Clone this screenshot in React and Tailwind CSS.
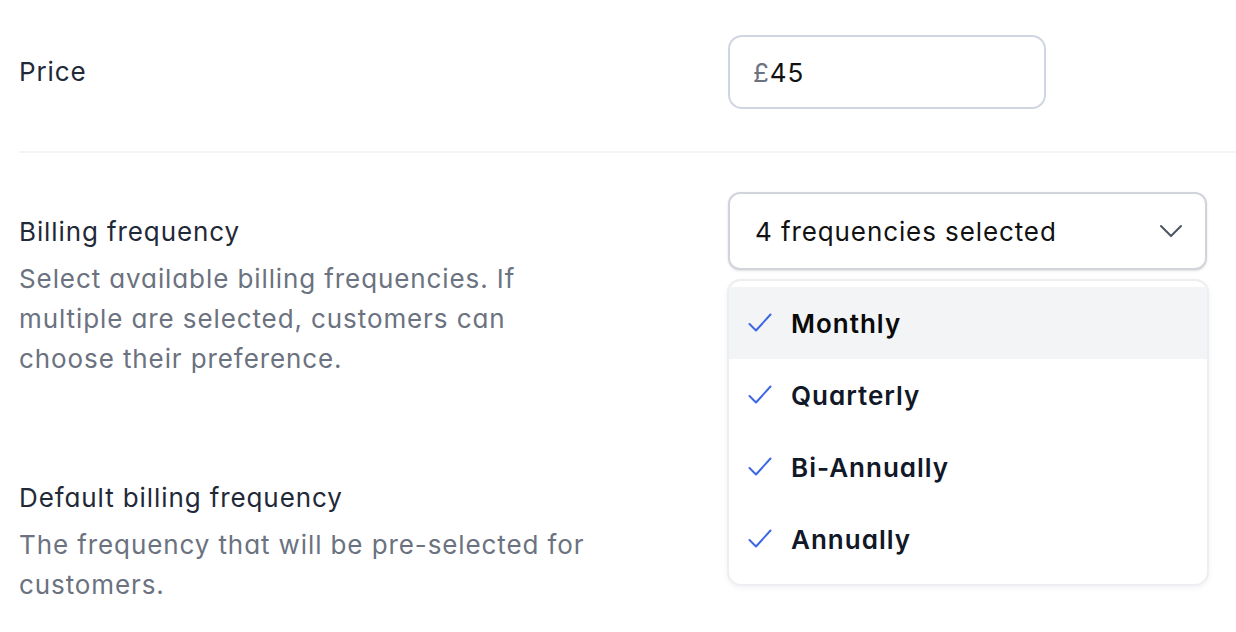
import { useState } from 'react'

const options = ['Monthly', 'Quarterly', 'Bi-Annually', 'Annually']

function CheckMark() {
  return (
    <svg width="24" height="20" viewBox="0 0 24 20" fill="none" className="shrink-0">
      <path d="M1.5 11 8 17.5 22.5 1.5" stroke="#3b66e6" strokeWidth="2" strokeLinecap="round" strokeLinejoin="round" />
    </svg>
  )
}

function Chevron() {
  return (
    <svg width="24" height="14" viewBox="0 0 24 14" fill="none">
      <path d="M2 2 12 12 22 2" stroke="#4b5563" strokeWidth="2" strokeLinecap="round" strokeLinejoin="round" />
    </svg>
  )
}

function FieldText({ label, children }) {
  return (
    <div className="max-w-[585px]">
      <p className="text-[26px] leading-[36px] text-[#1f2937]">{label}</p>
      {children && (
        <p className="mt-[9px] text-[26px] leading-[40px] text-[#6b7280]">{children}</p>
      )}
    </div>
  )
}

export default function App() {
  const [selected] = useState(options)
  const [hovered, setHovered] = useState('Monthly')

  return (
    <div
      className="min-h-[632px] bg-white pl-[19px] tracking-[0.9px] [font-feature-settings:'cv11'] antialiased"
      style={{ fontFamily: 'Inter, "Noto Sans", sans-serif' }}
    >
      {/* price */}
      <div className="grid grid-cols-[709px_1fr] items-center pt-[35px] pb-[42px] border-b-2 border-[#f3f4f6]">
        <FieldText label="Price" />
        <div className="w-[318px] h-[74px] rounded-[14px] border-2 border-[#cfd6e2] flex items-center px-[23px] text-[26px]">
          <span className="text-[#6b7280]">£</span>
          <span className="text-[#111111]">45</span>
        </div>
      </div>

      {/* billing frequency */}
      <div className="grid grid-cols-[709px_1fr] items-start pt-[39px]">
        <div className="pt-[22px]">
          <FieldText label="Billing frequency">
            Select available billing frequencies. If multiple are selected, customers can choose their preference.
          </FieldText>
        </div>
        <div className="relative w-[479px]">
          <button
            type="button"
            className="w-full h-[78px] rounded-[12px] border-2 border-[#d1d5db] bg-white shadow-sm flex items-center justify-between pl-[25px] pr-[22px] text-[26px] tracking-[0.9px] text-[#111111]"
          >
            <span>{selected.length} frequencies selected</span>
            <Chevron />
          </button>

          <div className="absolute left-[-1px] top-[87px] z-10 w-[482px] rounded-[14px] border-2 border-[#eceef1] bg-white pt-[6px] pb-[9px] shadow-[0_2px_6px_rgba(0,0,0,0.05)]">
            {options.map((o) => (
              <div
                key={o}
                onMouseEnter={() => setHovered(o)}
                className={`h-[72px] flex items-center gap-[19px] pl-[19px] ${hovered === o ? 'bg-[#f3f4f6] text-[#0a0a0a]' : 'text-[#111827]'}`}
              >
                <CheckMark />
                <span className="text-[26px] font-semibold tracking-[1px]">{o}</span>
              </div>
            ))}
          </div>
        </div>
      </div>

      {/* default billing frequency */}
      <div className="grid grid-cols-[709px_1fr] items-start pt-[101px] pb-[20px]">
        <FieldText label="Default billing frequency">
          The frequency that will be pre-selected for customers.
        </FieldText>
        <div className="w-[479px] h-[78px] rounded-[12px] border-2 border-[#d1d5db]" />
      </div>
    </div>
  )
}
